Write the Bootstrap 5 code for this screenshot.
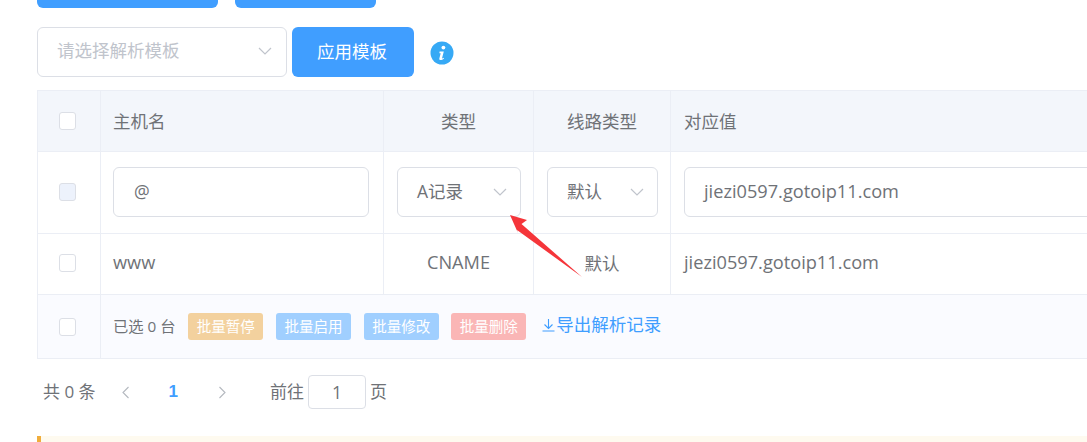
<!DOCTYPE html>
<html lang="zh">
<head>
<meta charset="utf-8">
<title>解析记录</title>
<link rel="stylesheet" href="https://cdn.jsdelivr.net/npm/bootstrap@5.3.0/dist/css/bootstrap.min.css">
<style>
html,body{height:442px;overflow:hidden;background:#fff}
body{font-family:"Open Sans","Noto Sans CJK SC",sans-serif;font-size:17.5px;color:#6f7277;position:relative}
.page-wrap{padding-left:37px;margin-top:-42px;width:1300px}
.top-btn{height:50px;background:#409eff;border:0;border-radius:6px;color:#fff}
.w181{width:181px}.w141{width:141px}
.sel-box{height:50px;border:1px solid #dcdfe6;border-radius:6px;background:#fff;display:flex;align-items:center;justify-content:space-between;line-height:1}
.sel-tpl{width:250px;padding:0 14px 2px 19px;color:#c0c4cc}
.apply-btn{width:122px;height:50px;background:#409eff;color:#fff;border:0;border-radius:6px;font-size:17.5px;margin-left:5px;padding:0 2px 2px 0}
.info-ic{margin-left:16px;margin-top:2px}
.rec-table{table-layout:fixed;width:1250px;border-collapse:collapse;border:1px solid #ebeef5;margin-top:13px}
.rec-table th,.rec-table td{border:1px solid #ebeef5;padding:0 12px;font-weight:400;vertical-align:middle;line-height:1.2}
.rec-table thead th{height:61px;background:#f3f6fb}
.rec-table .r-form td{height:82px;padding-bottom:2px}
.rec-table .r-form td.pl-one,.rec-table .r-data td.pl-one,.rec-table th.pl-one{padding-left:13px}
.rec-table .r-data td{height:61px;padding-bottom:2px}
.rec-table .r-foot td{height:64px;background:#fafbff;font-size:15.3px}
.cb{display:block;width:17px;height:18px;border:1px solid #dcdfe6;border-radius:3px;background:#fff;margin:0 0 0 9px}
.cb-off{background:#edf2fc}
.tx-in{height:50px;border:1px solid #dcdfe6;border-radius:6px;background:#fff;display:flex;align-items:center}
.tx-host{margin-right:2px;padding-left:20px}
.sel-sm{padding:0 13px 0 19px}
.url-tx{font-size:18.2px}
.bulk{display:inline-flex;align-items:center;justify-content:center;width:75px;height:27px;border-radius:3px;color:#fff;font-size:14.5px;margin-left:12.7px}
.bk-o{background:#f3d19e}.bk-b{background:#a0cfff}.bk-r{background:#fab6b6}
.exp-link{color:#409eff;text-decoration:none;font-size:17.5px;margin-left:15px;display:inline-flex;align-items:center}
.pager{height:34px;margin-top:16px;margin-left:6px;font-size:17px}
.pg-cur{color:#409eff;font-weight:700;font-family:"Liberation Sans",sans-serif;font-size:17px}
.pg-in{width:58px;height:34px;border:1px solid #dcdfe6;border-radius:4px;display:flex;align-items:center;justify-content:center;font-size:17.5px}
.notice{height:20px;margin-top:27px;background:#fefaef;border-left:4px solid #f0ad3c}
.arrow-mark{position:absolute;left:0;top:0;pointer-events:none}
</style>
</head>
<body>
<div class="page-wrap">
  <div class="d-flex" style="gap:17px">
    <button class="top-btn w181" aria-label="操作"></button>
    <button class="top-btn w141" aria-label="操作"></button>
  </div>
  <div class="d-flex align-items-center" style="margin-top:19px">
    <div class="sel-box sel-tpl">
      <span>请选择解析模板</span>
      <svg width="14" height="8" viewBox="0 0 14 8"><path d="M1 1l6 6 6-6" fill="none" stroke="#c0c4cc" stroke-width="1.2"/></svg>
    </div>
    <button class="apply-btn">应用模板</button>
    <svg class="info-ic" width="24" height="24" viewBox="0 0 24 24"><circle cx="12" cy="12" r="11.5" fill="#36a9f5"/><circle cx="13.4" cy="6.6" r="1.9" fill="#fff"/><path d="M9.6 10.6h4.2l-1.7 6.4c-.1.5.4.6 1.6-.2l.3.6c-1.3 1.2-2.4 1.7-3.4 1.7-1.1 0-1.5-.7-1.2-1.8l1.3-5h-1.3z" fill="#fff"/></svg>
  </div>
  <table class="rec-table">
    <colgroup><col style="width:63px"><col style="width:283px"><col style="width:150px"><col style="width:137px"><col></colgroup>
    <thead>
      <tr>
        <th><span class="cb"></span></th>
        <th>主机名</th>
        <th class="text-center">类型</th>
        <th class="text-center">线路类型</th>
        <th class="pl-one">对应值</th>
      </tr>
    </thead>
    <tbody>
      <tr class="r-form">
        <td><span class="cb cb-off"></span></td>
        <td><div class="tx-in tx-host">@</div></td>
        <td class="pl-one"><div class="sel-box sel-sm"><span>A记录</span><svg width="14" height="8" viewBox="0 0 14 8"><path d="M1 1l6 6 6-6" fill="none" stroke="#c0c4cc" stroke-width="1.2"/></svg></div></td>
        <td class="pl-one"><div class="sel-box sel-sm"><span>默认</span><svg width="14" height="8" viewBox="0 0 14 8"><path d="M1 1l6 6 6-6" fill="none" stroke="#c0c4cc" stroke-width="1.2"/></svg></div></td>
        <td class="pl-one"><div class="tx-in url-tx" style="padding-left:19px">jiezi0597.gotoip11.com</div></td>
      </tr>
      <tr class="r-data">
        <td><span class="cb"></span></td>
        <td class="url-tx">www</td>
        <td class="text-center url-tx">CNAME</td>
        <td class="text-center">默认</td>
        <td class="url-tx pl-one">jiezi0597.gotoip11.com</td>
      </tr>
      <tr class="r-foot">
        <td><span class="cb"></span></td>
        <td colspan="4"><span>已选 0 台</span><span class="bulk bk-o">批量暂停</span><span class="bulk bk-b">批量启用</span><span class="bulk bk-b">批量修改</span><span class="bulk bk-r">批量删除</span><a class="exp-link" href="#"><svg width="15" height="14" viewBox="0 0 15 14"><path d="M7.5 1v9M3.5 6.5l4 4 4-4M1.5 13h12" fill="none" stroke="#409eff" stroke-width="1.1"/></svg>导出解析记录</a></td>
      </tr>
    </tbody>
  </table>
  <div class="pager d-flex align-items-center">
    <span>共 0 条</span>
    <svg style="margin-left:25px" width="9" height="13" viewBox="0 0 9 13"><path d="M7.5 1L2 6.5 7.5 12" fill="none" stroke="#b4b8bf" stroke-width="1.1"/></svg>
    <span class="pg-cur" style="margin-left:39px">1</span>
    <svg style="margin-left:40px" width="9" height="13" viewBox="0 0 9 13"><path d="M1.5 1L7 6.5 1.5 12" fill="none" stroke="#b4b8bf" stroke-width="1.1"/></svg>
    <span style="margin-left:43px">前往</span>
    <div class="pg-in" style="margin-left:4px">1</div>
    <span style="margin-left:4px">页</span>
  </div>
  <div class="notice"></div>
</div>
<svg class="arrow-mark" width="1087" height="442" viewBox="0 0 1087 442"><path d="M510 215L527 220 521.5 224 582 277 517 230 518 233z" fill="#f5353a"/></svg>
</body>
</html>
